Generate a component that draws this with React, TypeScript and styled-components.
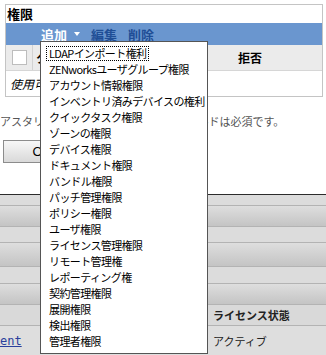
import React from "react";
import styled, { createGlobalStyle } from "styled-components";

const GlobalStyle = createGlobalStyle`
  html, body { margin: 0; padding: 0; background: #ffffff; }
  body {
    font-family: "Noto Sans CJK JP", "Noto Sans", sans-serif;
    color: #000;
    overflow: hidden;
  }
`;

const Page = styled.div`
  position: relative;
  width: 326px;
  height: 355px;
  overflow: hidden;
`;

const Panel = styled.section`
  margin: 4px 0 0 5px;
  width: 316px;
  border: 1px solid #c4c4c4;
`;

const PanelTitle = styled.div`
  height: 18px;
  line-height: 18px;
  font-size: 13px;
  font-weight: bold;
  padding-left: 1px;
`;

const Toolbar = styled.div`
  height: 22px;
  background: #6a96cf;
  display: flex;
  align-items: center;
  padding-left: 35px;
  gap: 11px;
`;

const ToolAction = styled.span<{ $active?: boolean }>`
  display: inline-flex;
  align-items: center;
  gap: 4px;
  font-size: 13px;
  font-weight: bold;
  color: ${(p) => (p.$active ? "#ffffff" : "#1f4e96")};
`;

const Caret = styled.span`
  width: 0;
  height: 0;
  border-left: 3.5px solid transparent;
  border-right: 3.5px solid transparent;
  border-top: 4px solid #ffffff;
  margin-left: 3px;
`;

const HeaderRow = styled.div`
  display: grid;
  grid-template-columns: 27px 1fr 72px 144px;
  height: 25px;
  background: #ebebeb;
  font-size: 12px;
  font-weight: bold;
`;

const CheckCell = styled.div`
  display: flex;
  align-items: center;
  justify-content: center;
  border-right: 1px solid #d2d2d2;
`;

const CheckBox = styled.span`
  width: 13px;
  height: 13px;
  background: #ffffff;
  border: 1px solid #bdbdbd;
`;

const HeadCell = styled.div<{ $center?: boolean }>`
  display: flex;
  align-items: center;
  justify-content: ${(p) => (p.$center ? "center" : "flex-start")};
  padding-left: ${(p) => (p.$center ? "0" : "3px")};
`;

const EmptyRow = styled.div`
  height: 25px;
  border-top: 1px solid #d6d6d6;
  display: flex;
  align-items: center;
  padding-left: 4px;
  font-size: 12px;
  font-style: italic;
`;

const Note = styled.p`
  margin: 16px 0 0 0;
  height: 16px;
  line-height: 16px;
  font-size: 11px;
  color: #555555;
  white-space: nowrap;
`;

const OkButton = styled.button`
  margin: 11px 0 0 3px;
  width: 78px;
  height: 23px;
  border: 1px solid #8c8c8c;
  background: linear-gradient(#f7f7f7, #d9d9d9);
  font-family: "Liberation Sans", sans-serif;
  font-size: 13px;
  color: #000;
  padding: 0;
`;

const Lower = styled.div`
  margin-top: 31px;
  border-top: 1px solid #2c2c2c;
  background: #dcdcdc;
`;

const Band = styled.div<{ $grad?: boolean; $h: number }>`
  height: ${(p) => p.$h}px;
  background: ${(p) => (p.$grad ? "linear-gradient(#dedede, #c4c4c4)" : "#dcdcdc")};
  border-bottom: 1px solid #b3b3b3;
`;

const DataRow = styled.div<{ $head?: boolean; $h: number }>`
  display: grid;
  grid-template-columns: 213px 1fr;
  align-items: center;
  height: ${(p) => p.$h}px;
  background: ${(p) => (p.$head ? "#d9d9d9" : "#dedede")};
  border-bottom: ${(p) => (p.$head ? "1px solid #b3b3b3" : "none")};
  font-size: 11px;
  font-weight: ${(p) => (p.$head ? "bold" : "normal")};
  color: #222;
`;

const LinkText = styled.a`
  font-family: "DejaVu Sans Mono", monospace;
  font-size: 12px;
  color: #2a3f9c;
  text-decoration: underline;
`;

const Menu = styled.ul`
  position: absolute;
  left: 40px;
  top: 41px;
  width: 166px;
  margin: 0;
  padding: 3px 0 4px 0;
  list-style: none;
  background: #ffffff;
  border: 1px solid #555555;
`;

const MenuItem = styled.li`
  height: 16px;
  line-height: 16px;
  padding-left: 6px;
  font-size: 11px;
  letter-spacing: -0.6px;
  white-space: nowrap;
  color: #000;
`;

const ItemLabel = styled.span<{ $focused?: boolean }>`
  display: inline-block;
  line-height: 13px;
  padding: 0 2px;
  outline: ${(p) => (p.$focused ? "1px dotted #000" : "none")};
`;

const menuItems = [
  "LDAPインポート権利",
  "ZENworksユーザグループ権限",
  "アカウント情報権限",
  "インベントリ済みデバイスの権利",
  "クイックタスク権限",
  "ゾーンの権限",
  "デバイス権限",
  "ドキュメント権限",
  "バンドル権限",
  "パッチ管理権限",
  "ポリシー権限",
  "ユーザ権限",
  "ライセンス管理権限",
  "リモート管理権",
  "レポーティング権",
  "契約管理権限",
  "展開権限",
  "検出権限",
  "管理者権限",
];

export default function App() {
  return (
    <Page>
      <GlobalStyle />
      <Panel>
        <PanelTitle>権限</PanelTitle>
        <Toolbar>
          <ToolAction $active>
            追加
            <Caret />
          </ToolAction>
          <ToolAction>編集</ToolAction>
          <ToolAction>削除</ToolAction>
        </Toolbar>
        <HeaderRow>
          <CheckCell>
            <CheckBox />
          </CheckCell>
          <HeadCell>タイプ</HeadCell>
          <HeadCell $center>許可</HeadCell>
          <HeadCell $center>拒否</HeadCell>
        </HeaderRow>
        <EmptyRow>使用可能な項目はありません</EmptyRow>
      </Panel>
      <Note>アスタリスク（＊）が付いているフィールドは必須です。</Note>
      <OkButton>OK</OkButton>
      <Lower>
        <Band $h={10} />
        <Band $grad $h={20} />
        <Band $h={15} />
        <Band $grad $h={23} />
        <Band $h={16} />
        <Band $grad $h={20} />
        <DataRow $head $h={20}>
          <span />
          <span>ライセンス状態</span>
        </DataRow>
        <DataRow $h={30}>
          <LinkText href="#">ent</LinkText>
          <span>アクティブ</span>
        </DataRow>
      </Lower>
      <Menu>
        {menuItems.map((m, i) => (
          <MenuItem key={m}>
            <ItemLabel $focused={i === 0}>{m}</ItemLabel>
          </MenuItem>
        ))}
      </Menu>
    </Page>
  );
}
